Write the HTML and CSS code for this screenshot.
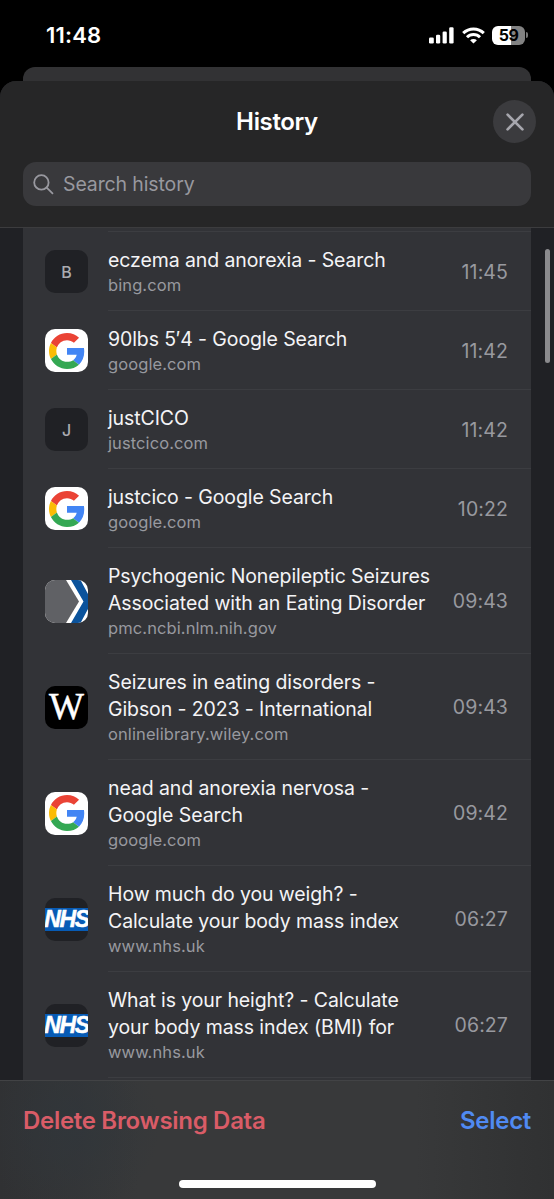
FILE: index.html
```html
<!DOCTYPE html>
<html lang="en">
<head>
<meta charset="utf-8">
<title>History</title>
<link rel="stylesheet" href="styles.css">
</head>
<body>
<svg class="defs" width="0" height="0" aria-hidden="true">
  <symbol id="google" viewBox="0 0 48 48">
    <path fill="#EA4335" d="M24 9.5c3.54 0 6.71 1.22 9.21 3.6l6.85-6.85C35.9 2.38 30.47 0 24 0 14.62 0 6.51 5.38 2.56 13.22l7.98 6.19C12.43 13.72 17.74 9.5 24 9.5z"/>
    <path fill="#4285F4" d="M46.98 24.55c0-1.57-.15-3.09-.38-4.55H24v9.02h12.94c-.58 2.96-2.26 5.48-4.78 7.18l7.73 6c4.51-4.18 7.09-10.36 7.09-17.65z"/>
    <path fill="#FBBC05" d="M10.53 28.59c-.48-1.45-.76-2.99-.76-4.59s.27-3.14.76-4.59l-7.98-6.19C.92 16.46 0 20.12 0 24c0 3.88.92 7.54 2.56 10.78l7.97-6.19z"/>
    <path fill="#34A853" d="M24 48c6.48 0 11.93-2.13 15.89-5.81l-7.73-6c-2.15 1.45-4.92 2.3-8.16 2.3-6.26 0-11.57-4.22-13.47-9.91l-7.98 6.19C6.51 42.62 14.62 48 24 48z"/>
  </symbol>
</svg>
<div class="screen">
  <div class="status">
    <span class="clock">11:48</span>
    <div class="indicators">
      <svg class="signal" width="25" height="17" viewBox="0 0 25 17" fill="#fff"><rect x="0" y="10.5" width="4.8" height="6" rx="1.3"/><rect x="7" y="7.8" width="4.2" height="8.7" rx="1.3"/><rect x="13.6" y="4.4" width="4.2" height="12.1" rx="1.3"/><rect x="20.2" y="0.3" width="4.4" height="16.2" rx="1.3"/></svg>
      <svg class="wifi" width="23" height="17" viewBox="0 0 23 17" fill="none" stroke="#fff" stroke-width="3"><path d="M1.2 6.1a14.7 14.7 0 0 1 20.6 0"/><path d="M5 10.2a9.2 9.2 0 0 1 13 0"/><path d="M11.5 16.6l-3.4-3.3a4.800 4.800 0 0 1 6.800 0z" fill="#fff" stroke="none"/></svg>
      <div class="battery"><span>59</span></div>
      <i class="nub"></i>
    </div>
  </div>
  <div class="back-sheet"></div>
  <main class="sheet">
    <header class="header">
      <div class="titlebar">
        <h1>History</h1>
        <button class="close" aria-label="Close"><svg width="18" height="18" viewBox="0 0 18 18"><path d="M1.600 1.600l14.800 14.800M16.400 1.600L1.600 16.400" stroke="#a6a6ad" stroke-width="2.700" stroke-linecap="round"/></svg></button>
      </div>
      <div class="search">
        <svg width="21" height="21" viewBox="0 0 21 21" fill="none" stroke="#98989f" stroke-width="1.800" stroke-linecap="round"><circle cx="8.400" cy="8.400" r="7.200"/><path d="M13.700 13.700l5.800 5.600"/></svg>
        <span>Search history</span>
      </div>
    </header>
    <section class="content">
      <ul class="list">
        <li class="row"><div class="icon letter">B</div><div class="entry"><div class="text"><div class="title">eczema and anorexia - Search</div><div class="site">bing.com</div></div><time>11:45</time></div></li>
        <li class="row"><div class="icon white"><svg width="36" height="36"><use href="#google"/></svg></div><div class="entry"><div class="text"><div class="title">90lbs 5′4 - Google Search</div><div class="site">google.com</div></div><time>11:42</time></div></li>
        <li class="row"><div class="icon letter">J</div><div class="entry"><div class="text"><div class="title">justCICO</div><div class="site">justcico.com</div></div><time>11:42</time></div></li>
        <li class="row"><div class="icon white"><svg width="36" height="36"><use href="#google"/></svg></div><div class="entry"><div class="text"><div class="title">justcico - Google Search</div><div class="site">google.com</div></div><time>10:22</time></div></li>
        <li class="row"><div class="icon white"><svg width="43" height="43" viewBox="0 0 43 43"><path fill="#606165" d="M0 0h21l13 21.500L21 43H0z"/><path fill="#0b539c" d="M26 0h9.500L43 14v15L35.500 43H26L38.500 21.500z"/></svg></div><div class="entry"><div class="text"><div class="title">Psychogenic Nonepileptic Seizures<br>Associated with an Eating Disorder</div><div class="site">pmc.ncbi.nlm.nih.gov</div></div><time>09:43</time></div></li>
        <li class="row"><div class="icon wiley"><span>W</span></div><div class="entry"><div class="text"><div class="title">Seizures in eating disorders -<br>Gibson - 2023 - International</div><div class="site">onlinelibrary.wiley.com</div></div><time>09:43</time></div></li>
        <li class="row"><div class="icon white"><svg width="36" height="36"><use href="#google"/></svg></div><div class="entry"><div class="text"><div class="title">nead and anorexia nervosa -<br>Google Search</div><div class="site">google.com</div></div><time>09:42</time></div></li>
        <li class="row"><div class="icon nhs"><span>NHS</span></div><div class="entry"><div class="text"><div class="title">How much do you weigh? -<br>Calculate your body mass index</div><div class="site">www.nhs.uk</div></div><time>06:27</time></div></li>
        <li class="row"><div class="icon nhs"><span>NHS</span></div><div class="entry"><div class="text"><div class="title">What is your height? - Calculate<br>your body mass index (BMI) for</div><div class="site">www.nhs.uk</div></div><time>06:27</time></div></li>
        <li class="row last"><div class="entry"></div></li>
      </ul>
      <i class="scrollbar"></i>
    </section>
    <footer class="toolbar">
      <div class="actions"><span class="delete">Delete Browsing Data</span><span class="select">Select</span></div>
      <i class="home"></i>
    </footer>
  </main>
</div>
</body>
</html>
```
FILE: styles.css
```css
* { box-sizing: border-box; }
body { margin: 0; background: #000; font-family: Inter, "Liberation Sans", sans-serif; color: #f4f4f6; }
.defs { position: absolute; }
.screen { width: 554px; height: 1199px; display: flex; flex-direction: column; overflow: hidden; }
.status { height: 67px; flex: none; display: flex; justify-content: space-between; padding: 23px 26px 0 46px; color: #fff; }
.clock { font-size: 22px; line-height: 25px; font-weight: 600; letter-spacing: 0.2px; }
.indicators { display: flex; align-items: center; height: 24px; }
.wifi { margin-left: 8px; }
.battery { width: 33px; height: 19px; margin-left: 7px; border-radius: 6px; background: linear-gradient(90deg, #fff 59%, #828282 59%); color: #000; font-size: 16px; line-height: 19px; font-weight: 700; text-align: center; letter-spacing: -0.6px; }
.nub { width: 2px; height: 6px; margin-left: 1px; border-radius: 0 3px 3px 0; background: #777; }
.back-sheet { flex: none; height: 14px; margin: 0 23px; border-radius: 12px 12px 0 0; background: #323234; }
.sheet { flex: 1; min-height: 0; display: flex; flex-direction: column; background: #202125; border-radius: 16px 16px 0 0; overflow: hidden; }
.header { flex: none; height: 147px; background: #262627; border-bottom: 1px solid #3c3c3e; }
.titlebar { height: 81px; display: grid; grid-template-columns: 61px 1fr 61px; align-items: center; }
.titlebar h1 { grid-column: 2; margin: 0; text-align: center; font-size: 24px; line-height: 30px; font-weight: 600; letter-spacing: -0.350px; color: #fff; }
.close { width: 43px; height: 43px; padding: 0; border: 0; border-radius: 50%; background: #3b3b3e; display: flex; align-items: center; justify-content: center; }
.search { height: 44px; margin: 0 23px; padding-left: 10px; border-radius: 13px; background: #39393c; display: flex; align-items: center; gap: 9px; color: #98989f; font-size: 19.500px; letter-spacing: -0.120px; }
.content { flex: none; height: 852px; display: flex; overflow: hidden; }
.list { list-style: none; margin: 0 0 0 23px; padding: 3px 0 0; width: 508px; background: #323337; }
.row { display: flex; align-items: center; padding-left: 22px; }
.icon { flex: none; width: 43px; height: 43px; margin-top: 2px; border-radius: 10px; overflow: hidden; display: flex; align-items: center; justify-content: center; }
.letter { background: #202125; color: #aaabb0; font-size: 16px; font-weight: 500; }
.white { background: #fff; }
.wiley { background: #000; color: #fff; font-family: "Liberation Serif", serif; font-size: 37px; line-height: 41px; align-items: flex-start; -webkit-text-stroke: 0.500px #fff; }
.nhs { background: #202125; }
.nhs span { flex: none; width: 43px; height: 23px; background: #075bb5; color: #fff; font-family: "Liberation Sans", sans-serif; font-size: 23px; line-height: 23px; font-weight: 700; font-style: italic; display: flex; justify-content: center; letter-spacing: -1.300px; -webkit-text-stroke: 0.500px #fff; }
.entry { flex: 1; margin-left: 20px; border-top: 1px solid #3c3d41; padding: 15px 23px 13px 0; display: flex; align-items: center; justify-content: space-between; }
.title { font-size: 19.500px; line-height: 27px; letter-spacing: -0.100px; white-space: nowrap; }
.site { font-size: 16.500px; line-height: 23px; letter-spacing: 0.100px; color: #98999f; white-space: nowrap; }
time { font-size: 19.500px; line-height: 27px; letter-spacing: 0.100px; color: #98999f; }
.last .entry { margin-left: 63px; padding: 0; height: 10px; }
.scrollbar { width: 5px; height: 114px; margin: 21px 0 0 14px; border-radius: 3px; background: #8b8b8e; }
.toolbar { flex: 1; display: flex; flex-direction: column; align-items: center; border-top: 1px solid #424345; background: radial-gradient(circle at 70px 45px, #30363bcc 0, #35383a00 90px), linear-gradient(90deg, #303133, #38393a 25%, #38393a 75%, #303132); }
.actions { align-self: stretch; display: flex; justify-content: space-between; padding: 25px 23px 0; font-size: 24px; line-height: 30px; font-weight: 600; letter-spacing: -0.300px; }
.delete { color: #d95c67; }
.select { color: #508af2; }
.home { width: 197px; height: 8px; margin-top: 44px; border-radius: 4px; background: #fff; }
```
